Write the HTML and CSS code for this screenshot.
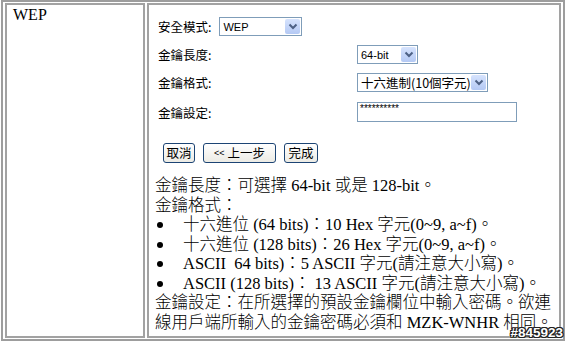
FILE: index.html
```html
<!DOCTYPE html>
<html>
<head>
    <title>WEP</title>
    <link rel="stylesheet" href="styles.css">
</head>
<body>
    <div class="page">
        <table class="grid">
            <tr>
                <td class="name">WEP</td>
                <td class="detail">
                    <div class="panel">
                        <div class="row first">
                            <span class="label">安全模式:</span>
                            <div class="select mode">
                                <span class="value latin">WEP</span>
                                <span class="arrow"><svg width="10" height="7" viewBox="0 0 10 7"><polyline points="1.5,1.5 5,5 8.5,1.5" fill="none" stroke="#4d6185" stroke-width="2"/></svg></span>
                            </div>
                        </div>
                        <div class="row">
                            <span class="label wide">金鑰長度:</span>
                            <div class="select length">
                                <span class="value latin">64-bit</span>
                                <span class="arrow"><svg width="10" height="7" viewBox="0 0 10 7"><polyline points="1.5,1.5 5,5 8.5,1.5" fill="none" stroke="#4d6185" stroke-width="2"/></svg></span>
                            </div>
                        </div>
                        <div class="row">
                            <span class="label wide">金鑰格式:</span>
                            <div class="select format">
                                <span class="value">十六進制(10個字元)</span>
                                <span class="arrow"><svg width="10" height="7" viewBox="0 0 10 7"><polyline points="1.5,1.5 5,5 8.5,1.5" fill="none" stroke="#4d6185" stroke-width="2"/></svg></span>
                            </div>
                        </div>
                        <div class="row key">
                            <span class="label wide">金鑰設定:</span>
                            <div class="password">**********</div>
                        </div>
                        <div class="buttons">
                            <span class="btn cancel">取消</span>
                            <span class="btn back"><span class="latin small">&lt;&lt;</span> 上一步</span>
                            <span class="btn done">完成</span>
                        </div>
                    </div>
                    <div class="notes">
                        <p>金鑰長度：可選擇 64-bit 或是 128-bit。</p>
                        <p>金鑰格式：</p>
                        <ul>
                            <li>十六進位 (64 bits)：10 Hex 字元(0~9, a~f)。</li>
                            <li>十六進位 (128 bits)：26 Hex 字元(0~9, a~f)。</li>
                            <li>ASCII &nbsp;64 bits)：5 ASCII 字元(請注意大小寫)。</li>
                            <li>ASCII (128 bits)： 13 ASCII 字元(請注意大小寫)。</li>
                        </ul>
                        <p>金鑰設定：在所選擇的預設金鑰欄位中輸入密碼。欲連線用戶端所輸入的金鑰密碼必須和 MZK-WNHR 相同。</p>
                    </div>
                </td>
            </tr>
        </table>
        <div class="stamp">#845923</div>
    </div>
</body>
</html>
```

FILE: styles.css
```css
body {
    margin: 0;
    background-color: #fff;
    color: #000;
    font-family: 'Liberation Serif', 'Noto Sans CJK TC', serif;
}
.page {
    position: relative;
    width: 567px;
    height: 343px;
    overflow: hidden;
}
.grid {
    border-collapse: separate;
    border-spacing: 2px 1px;
    border: 2px solid #9d9d9d;
    margin-left: 1px;
    width: 564px;
}
.grid td {
    border: 2px solid #a2a2a2;
    padding: 0;
    vertical-align: top;
}
.name {
    width: 130px;
    padding-left: 6px !important;
    font-size: 16px;
    line-height: 19px;
}
.detail {
    padding: 0 0 4px 3px !important;
}
.panel {
    padding: 12px 0 13px 6px;
    font-family: 'Noto Sans CJK TC', sans-serif;
    font-size: 12.5px;
}
.row {
    display: flex;
    align-items: center;
    height: 19px;
    margin-top: 9px;
}
.row.first {
    margin-top: 0;
    gap: 8px;
}
.row.key {
    height: 20px;
    margin-top: 10px;
}
.label.wide {
    width: 199px;
}
.select {
    display: flex;
    align-items: center;
    justify-content: space-between;
    box-sizing: border-box;
    height: 19px;
    border: 1px solid #7f9db9;
    background-color: #fff;
    padding-left: 3px;
}
.select.mode {
    width: 83px;
}
.select.length {
    width: 61px;
}
.select.format {
    width: 131px;
}
.value {
    font-size: 12.5px;
}
.latin {
    font-family: 'Liberation Sans', sans-serif;
    font-size: 11px;
}
.arrow {
    display: flex;
    align-items: center;
    justify-content: center;
    width: 15px;
    height: 15px;
    margin-right: 1px;
    border-radius: 2px;
    background: linear-gradient(#d6e3fd, #b4c9f4);
}
.password {
    box-sizing: border-box;
    width: 160px;
    height: 20px;
    border: 1px solid #7f9db9;
    padding: 1px 0 0 2px;
    font-family: 'Liberation Sans', sans-serif;
    font-size: 10px;
    line-height: 10px;
}
.buttons {
    display: flex;
    gap: 8px;
    margin: 21px 0 0 5px;
}
.btn {
    box-sizing: border-box;
    height: 20px;
    display: flex;
    align-items: center;
    justify-content: center;
    border: 1px solid #1c4474;
    border-radius: 3px;
    background: linear-gradient(#ffffff, #ecebe4);
    line-height: 1;
}
.btn.cancel {
    width: 32px;
}
.btn.back {
    width: 73px;
    gap: 3px;
}
.btn.done {
    width: 34px;
}
.small {
    font-size: 9px;
}
.notes {
    padding-left: 3px;
    font-size: 16.5px;
    line-height: 19.5px;
    font-weight: 300;
}
.notes p {
    margin: 0;
}
.notes ul {
    margin: 0;
    padding: 0;
    list-style: none;
}
.notes li {
    display: flex;
    align-items: center;
}
.notes li::before {
    content: "";
    flex: none;
    width: 6px;
    height: 6px;
    border-radius: 50%;
    background-color: #000;
    margin: 1px 20px 0 2px;
}
.stamp {
    position: absolute;
    right: 4px;
    bottom: 3px;
    font-family: 'Liberation Sans', sans-serif;
    font-weight: bold;
    font-size: 13.5px;
    color: #fff;
    text-shadow: 1px 0 0 #222, -1px 0 0 #222, 0 1px 0 #222, 0 -1px 0 #222,
        1px 1px 0 #222, -1px -1px 0 #222, 1px -1px 0 #222, -1px 1px 0 #222;
}
```
